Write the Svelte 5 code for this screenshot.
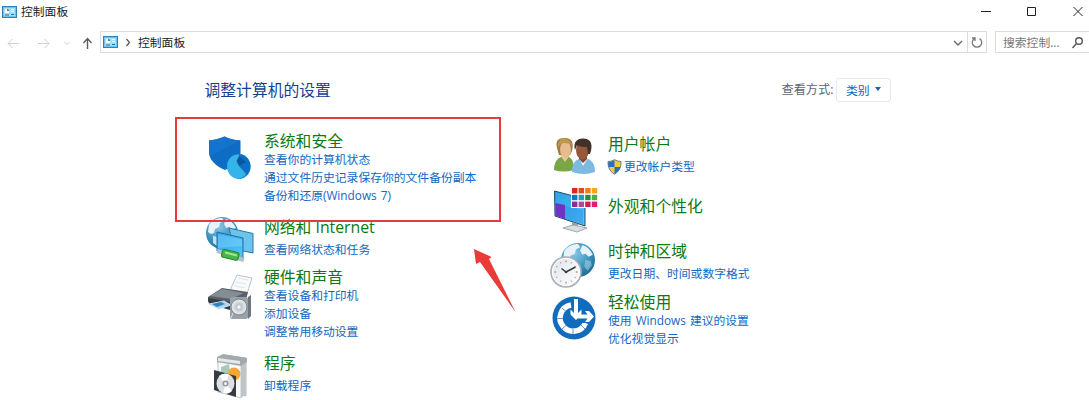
<script>
  const left = [
    { icon: "security", title: "系统和安全", links: ["查看你的计算机状态", "通过文件历史记录保存你的文件备份副本", "备份和还原(Windows 7)"] },
    { icon: "network", title: "网络和 Internet", links: ["查看网络状态和任务"] },
    { icon: "hardware", title: "硬件和声音", links: ["查看设备和打印机", "添加设备", "调整常用移动设置"] },
    { icon: "programs", title: "程序", links: ["卸载程序"] }
  ];

  const right = [
    { icon: "users", title: "用户帐户", links: ["更改帐户类型"], shield: true },
    { icon: "looks", title: "外观和个性化", links: [] },
    { icon: "clock", title: "时钟和区域", links: ["更改日期、时间或数字格式"] },
    { icon: "ease", title: "轻松使用", links: ["使用 Windows 建议的设置", "优化视觉显示"] }
  ];

  const swatches = [
    "#d8281f", "#e04a1c", "#f07c1c", "#f5a81c",
    "#1677b8", "#1c9fc0", "#2d8a3a", "#4fae4a",
    "#8d2a9c", "#b0489c", "#c81e5a", "#e0206a"
  ];
</script>

{#snippet panelIcon()}
  <svg class="panel-icon" width="15" height="12" viewBox="0 0 15 12">
    <rect x=".5" y=".5" width="14" height="11" fill="#6fc3ee" stroke="#2b80b8" />
    <rect x="2" y="2" width="11" height="8" fill="#a9dcf6" />
    <circle cx="5" cy="5" r="2.3" fill="#fff" />
    <path d="M5 5V2.7A2.3 2.3 0 0 1 7.3 5z" fill="#3b9a55" />
    <path d="M9 3.5h3M9 5.5h3" stroke="#fff" />
    <path d="M3 9h4M9 8.5h3" stroke="#1d6faa" />
  </svg>
{/snippet}

{#snippet globe(cx, cy, r)}
  <circle {cx} {cy} {r} fill="url(#globe)" />
  <g transform="translate({cx} {cy}) scale({r / 16})" fill="#e6f2f8">
    <path d="M-13-8C-10-13-5-15 0-15L2-12-2-10-3-6-7-4-8 0-11 1-14-1z" />
    <path d="M4-14C9-13 12-9 14-5L10-3 7-6 4-5 2-9z" />
    <path d="M-9 3l5 1 2 3-3 6-4-3z" opacity=".8" />
    <path d="M7 0l5 1 1 4-4 5-3-4z" opacity=".4" />
  </g>
{/snippet}

{#snippet categoryIcon(name)}
  <svg class="icon {name}" width="60" height="56" viewBox="0 0 60 56">
    {#if name === "security"}
      <path d="M9 10.500C14 10 19 9 24.500 6.500C29 9 34 10 40.500 10.500V23C40.500 31 33 36 25 40C16 36 9 30 9 22z" fill="#0f6cc4" />
      <path d="M9 10.500C14 10 19 9 24.500 6.500C29 9 34 10 40.500 10.500L10 26Q9 24 9 22z" fill="#1473cc" />
      <ellipse cx="39.500" cy="36.500" rx="11" ry="12.500" fill="#1a8fd4" />
      <ellipse cx="37.500" cy="36.500" rx="10.500" ry="12" fill="#35b4ea" />
      <path d="M39 36L39 24.200C45 24 50.500 30 50.500 36.500C50.500 40 49 43 47 45z" fill="#0c6fc4" />
      <path d="M39 36L36.500 31 39 26 46 32z" fill="#0a559e" />
    {:else if name === "network"}
      {@render globe(22, 23, 16)}
      <path d="M29 18L53 23.500V43L34 39z" fill="#6cc4ec" stroke="#2878a8" />
      <path d="M17 22L43 28V49L17 41z" fill="url(#screen)" stroke="#1c6fa5" />
      <path d="M18 24L42 29.500V36L18 38z" fill="#8fdcff" opacity=".4" />
      <path d="M17 41L24 43M37 48L44 50" stroke="#b7c0c3" stroke-width="4" />
      <rect x="22" y="41" width="17" height="8" rx="2" transform="rotate(13 31 44)" fill="#45b649" stroke="#278331" />
      <path d="M25 42.500L37 45.500" stroke="#a2e68d" stroke-width="2" />
    {:else if name === "hardware"}
      <path d="M31 20L37 7 52 10 46 29 30 26z" fill="#f8fafb" stroke="#bbc3c8" />
      <path d="M38 10l10 2M36 14l10 2M35 18l10 2" stroke="#e2e7ea" />
      <path d="M8 29L22 20 48 24 45 35 28 40 8 34z" fill="#596069" />
      <path d="M10 28L22 21 44 25 31 31z" fill="#858d94" />
      <path d="M8 30L30 34V42L9 36z" fill="#343b42" />
      <path d="M9 36L24 33 31 37 19 41z" fill="#aad8f2" stroke="#d2dce0" />
      <path d="M12 36l9-2 4 2-8 3z" fill="#2b85bf" />
      <rect x="30" y="29" width="18" height="22" rx="2" fill="#98a2a9" />
      <path d="M48 29l3-2v21l-3 3z" fill="#6d777e" />
      <circle cx="39" cy="39" r="8" fill="#dce1e4" stroke="#7c868c" />
      <circle cx="39" cy="39" r="4.500" fill="#c5ccd1" />
      <circle cx="39" cy="39" r="1.500" fill="#f9fafb" />
      <path d="M33 45l-2 5" stroke="#d5dcdf" />
    {:else if name === "programs"}
      <path d="M18 13L23 7 46 10V48L20 41z" fill="#e7eaeb" stroke="#b5babd" />
      <path d="M18 13L41 16V50L18 44z" fill="#f8f9f9" stroke="#c5c8ca" />
      <path d="M41 16L46 10V46L41 50z" fill="#bfc4c7" />
      <path d="M17 9L23 6 47 10V14L41 18 17 14z" fill="#a4a9ac" />
      <path d="M18 10L40 13V16L18 13z" fill="#e6e8e9" />
      <path d="M21 19l8-3 1 9-9 3z" fill="#a1ccbb" />
      <circle cx="34" cy="26" r="6.500" fill="#f6a43a" />
      <path d="M14 22L36 28V49L14 42z" fill="#353b40" />
      <ellipse cx="25.500" cy="35.500" rx="9" ry="10" fill="#dce0e3" />
      <path d="M25.500 35.500L19 28Q24 24 29 27zM25.500 35.500L32 43Q28 47 23 45z" fill="#fff" />
      <circle cx="25.500" cy="35.500" r="3" fill="#91989d" />
      <circle cx="25.500" cy="35.500" r="1.500" fill="#f8f8f8" />
    {:else if name === "users"}
      <path d="M9 40C9 31 13 27 20 26C27 27 29 31 29 40Q18 43 9 40z" fill="#79a646" />
      <path d="M15 25L20 32 25 25z" fill="#f0c49a" />
      <path d="M12 18C10 10 14 8 20 8C27 8 29 13 27 21L25 25H14z" fill="#9c7c42" />
      <ellipse cx="20.500" cy="19.500" rx="5.500" ry="8" fill="#e6bb8f" />
      <path d="M13 18Q16 10 27 15Q24 8 18 8Q12 11 13 18z" fill="#bd9950" />
      <path d="M27 42C27 33 30 29 39 28C47 29 50 34 50 42Q39 46 27 42z" fill="#7eb9e0" />
      <path d="M34 28L38 36 43 28z" fill="#f0f6f9" />
      <path d="M34 22h8v7l-4 4-4-4z" fill="#7d4a30" />
      <ellipse cx="37.500" cy="20" rx="6.500" ry="9.500" fill="#95583a" />
      <path d="M30 20C28 12 32 8 39 8.500C47 9 48 16 45 24L43 24 42 17Q35 17 32 15z" fill="#403129" />
    {:else if name === "looks"}
      <path d="M9.500 9L40 17V44L10 34z" fill="url(#screen)" stroke="#244b6c" />
      <path d="M10.500 21L20 23V37L10.500 33.500z" fill="#7133c5" />
      <path d="M20 24L38 28V42L20 37z" fill="#2787e4" opacity=".4" />
      <path d="M27 40L33 42V46H27z" fill="#9aa1a5" />
      <path d="M18 46L28 43 42 46 32 50z" fill="#dbdfe1" stroke="#a1a8ac" />
      <rect x="26" y="5" width="27" height="21" fill="#fff" />
      {#each swatches as color, i}
        <rect x={27 + (i % 4) * 6.6} y={6 + Math.floor(i / 4) * 6.8} width="5.4" height="5.4" fill={color} />
      {/each}
    {:else if name === "clock"}
      {@render globe(33, 22, 17)}
      <circle cx="21" cy="34" r="15" fill="#fafbfb" stroke="#a9b0b5" stroke-width="1.600" />
      <circle cx="21" cy="34" r="13" fill="url(#dial)" />
      {#each Array(12) as _, i}
        <path d="M21 22.500v1.700" stroke={i % 3 ? "#b8a6a6" : "#a76060"} transform="rotate({i * 30} 21 34)" />
      {/each}
      <path d="M21 34L16.500 30.500M21 34L30.500 29" stroke="#343b40" stroke-width="1.500" />
      <circle cx="21" cy="34" r="1.300" fill="#343b40" />
    {:else if name === "ease"}
      <circle cx="29" cy="28" r="21.500" fill="#116cbe" />
      <path d="M26 15A13.200 13.200 0 1 0 40.500 33" fill="none" stroke="#fff" stroke-width="5.500" />
      <path d="M17 18l4 3.500M12 28.500h6M17 39l4-3.500M28 44v-5M40 39l-4-4" stroke="#5c9bd4" />
      <path d="M28.500 8h6v13l4 1v3h9l2 2-3 4-5 2h-6l-4-1-7-6v-6l2.500 1z" fill="#116cbe" />
      <path d="M29 9H33V23L36.500 19.500V24.500L31 30 25.500 24.500V19.500L29 23z" fill="#fff" />
      <path d="M34 24.500H42.500L40 21H44L49 26.500 44 32H40L42.500 28.500H33z" fill="#fff" />
    {/if}
  </svg>
{/snippet}

{#snippet category(item)}
  <section class="category row-{item.icon}">
    {@render categoryIcon(item.icon)}
    <div class="text">
      <h2>{item.title}</h2>
      <ul class:spaced={item.links.length === 1}>
        {#each item.links as link}
          <li>
            {#if item.shield}
              <svg class="shield" width="15" height="16" viewBox="0 0 15 16">
                <path d="M7.500.7Q10.500 2.500 14 2.500Q14.500 11 7.500 15.300Q.5 11 1 2.500Q4.500 2.500 7.500.7z" fill="#f6c83c" stroke="#6b7884" />
                <path d="M7.500 1.300V8H1.500Q1 5 1.500 3Q5 3 7.500 1.300zM7.500 8H13.400Q12 12.500 7.500 14.700z" fill="#2273b9" />
              </svg>
            {/if}
            <span>{link}</span>
          </li>
        {/each}
      </ul>
    </div>
  </section>
{/snippet}

<main>
  <svg class="defs" width="0" height="0">
    <defs>
      <radialGradient id="globe" cx=".4" cy=".3" r=".75">
        <stop offset="0" stop-color="#88c8e4" />
        <stop offset=".6" stop-color="#3a94c0" />
        <stop offset="1" stop-color="#1b658f" />
      </radialGradient>
      <linearGradient id="screen" x2="1" y2="1">
        <stop offset="0" stop-color="#2e9fe6" />
        <stop offset="1" stop-color="#55c7f7" />
      </linearGradient>
      <linearGradient id="dial" x2="1" y2="1">
        <stop offset="0" stop-color="#dfe5e8" />
        <stop offset="1" stop-color="#fff" />
      </linearGradient>
    </defs>
  </svg>

  <header class="titlebar">
    {@render panelIcon()}
    <span class="name">控制面板</span>
    <svg class="window-buttons" width="109" height="24" viewBox="0 0 109 24" fill="none" stroke="#222">
      <path d="M1 11.500h10M47.500 7.500h8v8h-8zM93.500 7l9 9M102.500 7l-9 9" />
    </svg>
  </header>

  <nav class="toolbar">
    <svg class="arrows" width="100" height="24" viewBox="0 0 100 24" fill="none">
      <path d="M8 13.500h11M12.500 9L8 13.500 12.500 18M38 13.500h11M44.500 9L49 13.500 44.500 18M64.500 12l2.500 2.500 2.500-2.500" stroke="#cfcfcf" />
      <path d="M87.500 19V9M83.500 13L87.500 8.500 91.500 13" stroke="#5c5c5c" stroke-width="1.400" />
    </svg>
    <div class="address">
      {@render panelIcon()}
      <svg class="chevron" width="6" height="9" viewBox="0 0 6 9" fill="none" stroke="#555"><path d="M1.500 1L4.500 4.500 1.500 8" stroke-width="1.200" /></svg>
      <span>控制面板</span>
      <svg class="down" width="10" height="8" viewBox="0 0 10 8" fill="none" stroke="#666"><path d="M1 3l4 4 4-4" stroke-width="1.300" /></svg>
      <div class="refresh">
        <svg width="14" height="14" viewBox="0 0 14 14" fill="none" stroke="#777" stroke-width="1.300">
          <path d="M4.500 3.500A4.700 4.700 0 1 0 9.500 3.500M2 3h3v3" />
        </svg>
      </div>
    </div>
    <div class="search">
      <span>搜索控制...</span>
      <svg width="14" height="14" viewBox="0 0 14 14" fill="none" stroke="#555" stroke-width="1.400">
        <circle cx="8" cy="6" r="3.300" /><path d="M5.500 8.500L1.500 13" />
      </svg>
    </div>
  </nav>

  <div class="heading">
    <h1>调整计算机的设置</h1>
    <span class="view-label">查看方式:</span>
    <button>类别 <i></i></button>
  </div>

  <div class="columns">
    <div class="column">
      {#each left as item}
        {@render category(item)}
      {/each}
    </div>
    <div class="column second">
      {#each right as item}
        {@render category(item)}
      {/each}
    </div>
  </div>

  <!-- annotation over the page -->
  <div class="highlight"></div>
  <svg class="pointer" width="46" height="68" viewBox="0 0 46 68">
    <path d="M3 2L5 17 9 15 44.500 65 18 12 20.500 10z" fill="#e93b38" />
  </svg>
</main>

<style>
  :global(body) {
    background: #fff;
  }

  main {
    position: relative;
    width: 1089px;
    height: 400px;
    overflow: hidden;
    background: #fff;
    color: #222;
    font-family: "Open Sans", "Noto Sans CJK SC", sans-serif;
    font-size: 11.8px;
  }

  h1, h2, ul {
    margin: 0;
    padding: 0;
    font-weight: normal;
  }

  svg {
    flex: none;
  }

  .defs {
    display: block;
  }

  .titlebar {
    display: flex;
    align-items: center;
    height: 24px;
    padding-left: 2px;
  }

  .name {
    margin-left: 4px;
    padding-bottom: 4px;
  }

  .window-buttons {
    margin-left: auto;
  }

  .toolbar {
    display: flex;
    align-items: center;
    height: 22px;
    margin-top: 7px;
  }

  .toolbar > .arrows {
    height: 24px;
  }

  .address {
    display: flex;
    align-items: center;
    box-sizing: border-box;
    width: 887px;
    height: 22px;
    padding-left: 2px;
    border: 1px solid #dcdcdc;
  }

  .address span,
  .search span {
    padding-bottom: 2px;
  }

  .chevron {
    margin: 0 7px;
  }

  .down {
    margin-left: auto;
    margin-right: 4px;
  }

  .refresh {
    display: flex;
    align-items: center;
    justify-content: center;
    width: 18px;
    height: 20px;
    border-left: 1px solid #dcdcdc;
  }

  .search {
    display: flex;
    align-items: center;
    box-sizing: border-box;
    flex: 1;
    height: 22px;
    margin-left: 8px;
    padding-left: 7px;
    border: 1px solid #dcdcdc;
    border-right: 0;
    color: #777;
    white-space: nowrap;
  }

  .search svg {
    margin-left: auto;
    margin-right: 4px;
  }

  .heading {
    display: flex;
    align-items: center;
    height: 24px;
    margin-top: 25px;
    padding-left: 204.5px;
  }

  h1 {
    width: 577px;
    color: #153f90;
    font-size: 15.8px;
    line-height: 24px;
  }

  .view-label {
    width: 54.5px;
    padding-bottom: 2px;
    color: #5d6670;
    font-size: 12.2px;
    white-space: nowrap;
  }

  button {
    display: flex;
    align-items: center;
    gap: 5px;
    box-sizing: border-box;
    width: 55px;
    height: 24px;
    padding: 0 0 2px 9px;
    border: 1px solid #e8e8e8;
    border-radius: 3px;
    background: #fff;
    color: #0d66bd;
    font: inherit;
  }

  button i {
    border: 3.5px solid transparent;
    border-top: 4px solid #0d66bd;
    border-bottom: 0;
  }

  .columns {
    display: flex;
    padding: 29px 0 0 200px;
  }

  .column {
    width: 345px;
  }

  .second {
    padding-top: 3px;
  }

  .category {
    display: flex;
    gap: 4px;
    height: 86px;
  }

  .second .category {
    gap: 3px;
  }

  .row-network { height: 50px; }
  .row-programs { height: 47px; }
  .row-users { height: 62px; }
  .second .row-looks { height: 45px; }
  .row-clock { height: 51px; }

  .icon.security { margin-top: -1px; }
  .icon.network { margin-top: -7px; }
  .icon.hardware { margin-top: 1px; }
  .icon.programs { margin-top: -5px; }
  .icon.users { margin-top: -4px; }
  .icon.looks { margin-top: -14px; }
  .icon.clock { margin-top: -3px; }
  .icon.ease { margin-top: -2px; }

  .text {
    white-space: nowrap;
  }

  h2 {
    color: #0b7a12;
    font-size: 15.8px;
    line-height: 20px;
  }

  ul {
    list-style: none;
    color: #1267c0;
    word-spacing: 1px;
  }

  ul.spaced {
    margin-top: 4px;
  }

  li {
    display: flex;
    align-items: center;
    height: 18px;
    line-height: 16px;
  }

  li span {
    padding-bottom: 2px;
  }

  .shield {
    margin: 0 2px 0 -1px;
  }

  .highlight {
    position: absolute;
    left: 175px;
    top: 117px;
    box-sizing: border-box;
    width: 326px;
    height: 105px;
    border: 2px solid #e8393c;
  }

  .pointer {
    position: absolute;
    left: 471px;
    top: 247px;
  }
</style>
